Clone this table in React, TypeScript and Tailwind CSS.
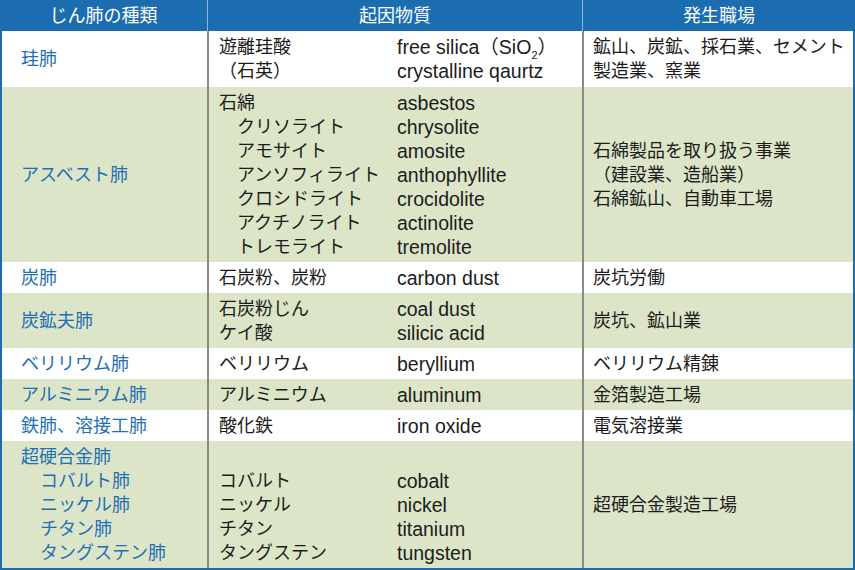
import React from 'react';

type Line = { jp: string; en?: React.ReactNode; indent?: boolean };

type Row = {
  name: { text: string; indent?: boolean }[];
  lines: Line[];
  lead?: number; // blank lines before substances
  place: string[];
  green?: boolean;
};

const rows: Row[] = [
  {
    name: [{ text: '珪肺' }],
    lines: [
      {
        jp: '遊離珪酸',
        en: (
          <>
            free silica（SiO<sub className="text-[11px] align-[-2px]">2</sub>）
          </>
        ),
      },
      { jp: '（石英）', en: 'crystalline qaurtz' },
    ],
    place: ['鉱山、炭鉱、採石業、セメント', '製造業、窯業'],
  },
  {
    name: [{ text: 'アスベスト肺' }],
    lines: [
      { jp: '石綿', en: 'asbestos' },
      { jp: 'クリソライト', en: 'chrysolite', indent: true },
      { jp: 'アモサイト', en: 'amosite', indent: true },
      { jp: 'アンソフィライト', en: 'anthophyllite', indent: true },
      { jp: 'クロシドライト', en: 'crocidolite', indent: true },
      { jp: 'アクチノライト', en: 'actinolite', indent: true },
      { jp: 'トレモライト', en: 'tremolite', indent: true },
    ],
    place: ['石綿製品を取り扱う事業', '（建設業、造船業）', '石綿鉱山、自動車工場'],
    green: true,
  },
  {
    name: [{ text: '炭肺' }],
    lines: [{ jp: '石炭粉、炭粉', en: 'carbon dust' }],
    place: ['炭坑労働'],
  },
  {
    name: [{ text: '炭鉱夫肺' }],
    lines: [
      { jp: '石炭粉じん', en: 'coal dust' },
      { jp: 'ケイ酸', en: 'silicic acid' },
    ],
    place: ['炭坑、鉱山業'],
    green: true,
  },
  {
    name: [{ text: 'ベリリウム肺' }],
    lines: [{ jp: 'ベリリウム', en: 'beryllium' }],
    place: ['ベリリウム精錬'],
  },
  {
    name: [{ text: 'アルミニウム肺' }],
    lines: [{ jp: 'アルミニウム', en: 'aluminum' }],
    place: ['金箔製造工場'],
    green: true,
  },
  {
    name: [{ text: '鉄肺、溶接工肺' }],
    lines: [{ jp: '酸化鉄', en: 'iron oxide' }],
    place: ['電気溶接業'],
  },
  {
    name: [
      { text: '超硬合金肺' },
      { text: 'コバルト肺', indent: true },
      { text: 'ニッケル肺', indent: true },
      { text: 'チタン肺', indent: true },
      { text: 'タングステン肺', indent: true },
    ],
    lead: 1,
    lines: [
      { jp: 'コバルト', en: 'cobalt' },
      { jp: 'ニッケル', en: 'nickel' },
      { jp: 'チタン', en: 'titanium' },
      { jp: 'タングステン', en: 'tungsten' },
    ],
    place: ['超硬合金製造工場'],
    green: true,
  },
];

export default function App() {
  return (
    <div
      className="w-[855px] h-[570px] bg-white text-[18px] leading-[24px] text-[#1c1c1c]"
      style={{ fontFamily: '"Liberation Sans", "Noto Sans CJK JP", sans-serif' }}
    >
      <div className="border-x-2 border-b-2 border-[#1b6db0]">
        {/* header */}
        <div className="flex h-[31px] bg-[#1b6db0] text-white -mx-[2px]">
          <div className="w-[207px] flex items-center justify-center">じん肺の種類</div>
          <div className="w-[375px] border-l border-[#8db6dc] flex items-center justify-center">起因物質</div>
          <div className="flex-1 border-l border-[#8db6dc] flex items-center justify-center">発生職場</div>
        </div>

        {rows.map((row, i) => (
          <div
            key={i}
            className={`flex ${row.green ? 'bg-[#dce5c8]' : 'bg-white'}`}
          >
            <div
              className={`w-[205px] pl-[19px] pt-1 ${i === 0 ? 'pb-1' : 'pb-[3px]'} text-[#1f6fb3] flex flex-col ${
                row.name.length > 1 ? 'justify-start' : 'justify-center'
              }`}
            >
              {row.name.map((n, j) => (
                <div key={j} className={n.indent ? 'pl-[19px]' : ''}>
                  {n.text}
                </div>
              ))}
            </div>
            <div className={`w-[375px] border-l-2 border-[#8a8a8a] pl-[10px] pt-1 ${i === 0 ? 'pb-1' : 'pb-[3px]'}`}>
              {Array.from({ length: row.lead ?? 0 }).map((_, j) => (
                <div key={`b${j}`} className="h-[24px]" />
              ))}
              {row.lines.map((l, j) => (
                <div key={j} className="flex">
                  <div className={`w-[178px] shrink-0 ${l.indent ? 'pl-[18px]' : ''}`}>{l.jp}</div>
                  <div className="text-[19.5px]">{l.en}</div>
                </div>
              ))}
            </div>
            <div className="flex-1 border-l-2 border-[#8a8a8a] pl-[9px] flex flex-col justify-center">
              {row.place.map((p, j) => (
                <div key={j}>{p}</div>
              ))}
            </div>
          </div>
        ))}
      </div>
    </div>
  );
}
